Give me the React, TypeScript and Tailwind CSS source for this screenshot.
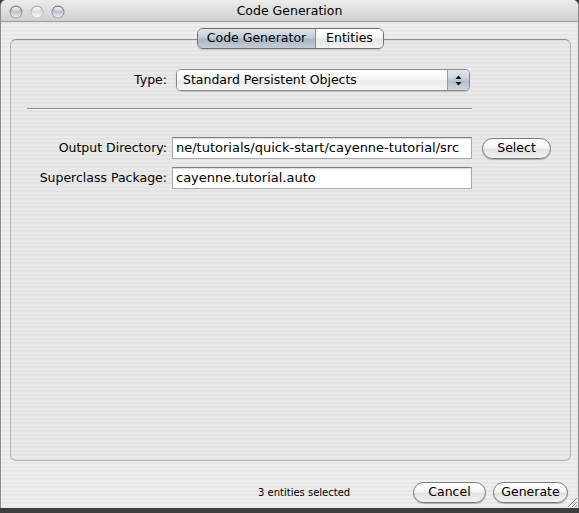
import React from "react";

const font = "font-['DejaVu_Sans',sans-serif]";

function Light({ faded }: { faded?: boolean }) {
  const id = faded ? "lf" : "ld";
  return (
    <svg width="14" height="14" viewBox="0 0 14 14">
      <defs>
        <linearGradient id={id + "b"} x1="0" y1="0" x2="0" y2="1">
          <stop offset="0" stopColor={faded ? "#9da2a8" : "#6f7680"} />
          <stop offset="1" stopColor={faded ? "#c4c8cc" : "#9aa1aa"} />
        </linearGradient>
        <linearGradient id={id + "f"} x1="0" y1="0" x2="0" y2="1">
          <stop offset="0" stopColor={faded ? "#c9ccd0" : "#a3a9b1"} />
          <stop offset="0.55" stopColor={faded ? "#dfe1e4" : "#c2c7ce"} />
          <stop offset="1" stopColor={faded ? "#f6f7f8" : "#eef0f2"} />
        </linearGradient>
        <linearGradient id={id + "h"} x1="0" y1="0" x2="0" y2="1">
          <stop offset="0" stopColor="#ffffff" stopOpacity="0.95" />
          <stop offset="1" stopColor="#ffffff" stopOpacity="0.15" />
        </linearGradient>
      </defs>
      <circle cx="7" cy="7" r="6.5" fill={`url(#${id}b)`} />
      <circle cx="7" cy="7" r="5.6" fill={`url(#${id}f)`} />
      <ellipse cx="7" cy="4.3" rx="3.8" ry="2.4" fill={`url(#${id}h)`} />
    </svg>
  );
}

function PillButton({ label, w }: { label: string; w: string }) {
  return (
    <div
      className={`${w} h-[21px] rounded-full border border-[#7a7a7a] bg-[linear-gradient(to_bottom,#ffffff_0%,#f4f4f4_45%,#e2e2e2_55%,#f2f2f2_100%)] shadow-[0_1px_1px_rgba(0,0,0,0.25)] flex items-center justify-center text-[12.5px] text-black leading-none`}
    >
      {label}
    </div>
  );
}

export default function App() {
  return (
    <div className={`w-[579px] h-[513px] bg-[#3e3e3e] overflow-hidden ${font}`}>
      <div className="w-[579px] h-[508px] rounded-t-[6px] overflow-hidden flex flex-col border-x border-[#8d8d8d] bg-[repeating-linear-gradient(to_bottom,#eeeeee_0px,#eeeeee_2px,#e7e7e7_2px,#e7e7e7_4px)]">
        {/* Title bar */}
        <div className="h-[22px] shrink-0 relative flex items-center justify-center border-b border-[#9a9a9a] bg-[linear-gradient(to_bottom,#ececec_0%,#dedede_50%,#cfcfcf_100%)]">
          <div className="absolute left-[8px] top-[5px] flex gap-[7px]">
            <Light />
            <Light faded />
            <Light />
          </div>
          <span className="text-[12.5px] text-black leading-none pt-[1px]">Code Generation</span>
        </div>

        {/* Body */}
        <div className="flex-1 flex flex-col pl-[9px] pr-[7px] pt-[6px]">
          {/* Segmented control */}
          <div className="relative z-10 flex justify-center -mb-[10px]">
            <div className="flex h-[21px] rounded-[6px] border border-[#6e6e6e] overflow-hidden shadow-[0_1px_1px_rgba(0,0,0,0.15)] text-[12.5px] leading-none">
              <div className="w-[118px] flex items-center justify-center text-black bg-[linear-gradient(to_bottom,#dfe4ea_0%,#c3ccd6_45%,#acb7c4_55%,#c4ccd6_100%)] border-r border-[#8a8a8a]">
                Code Generator
              </div>
              <div className="w-[67px] flex items-center justify-center text-black bg-[linear-gradient(to_bottom,#ffffff_0%,#f5f5f5_45%,#e6e6e6_55%,#f3f3f3_100%)]">
                Entities
              </div>
            </div>
          </div>

          {/* Tab box */}
          <div className="h-[422px] rounded-[6px] border border-[#b2b2b2] border-t-[#8f8f8f] bg-[repeating-linear-gradient(to_bottom,#e9e9e9_0px,#e9e9e9_2px,#e3e3e3_2px,#e3e3e3_4px)] flex flex-col pt-[29px] shadow-[inset_0_1px_1px_rgba(0,0,0,0.06)]">
            {/* Type row */}
            <div className="flex items-center h-[22px]">
              <div className="w-[156px] text-right text-[12.5px] text-black">Type:</div>
              <div className="ml-[9px] w-[294px] h-[22px] rounded-[5px] border border-[#8a8a8a] flex overflow-hidden shadow-[0_1px_1px_rgba(0,0,0,0.15)]">
                <div className="flex-1 flex items-center pl-[6px] text-[12.5px] text-black bg-[linear-gradient(to_bottom,#ffffff_0%,#f6f6f6_45%,#ebebeb_55%,#f7f7f7_100%)]">
                  Standard Persistent Objects
                </div>
                <div className="w-[22px] border-l border-[#9a9a9a] flex items-center justify-center bg-[linear-gradient(to_bottom,#e4e9ef_0%,#c7d0da_45%,#b3bfcc_55%,#cfd7df_100%)]">
                  <svg width="7" height="11" viewBox="0 0 7 11">
                    <path d="M3.5 0.5 L6.5 4 L0.5 4 Z" fill="#111" />
                    <path d="M3.5 10.5 L6.5 7 L0.5 7 Z" fill="#111" />
                  </svg>
                </div>
              </div>
            </div>

            {/* Separator */}
            <div className="ml-[16px] w-[445px] h-px bg-[#8c8c8c] mt-[17px] shadow-[0_1px_0_#fafafa]" />

            {/* Fields */}
            <div className="mt-[28px] flex flex-col gap-[8px]">
              <div className="flex items-center h-[22px]">
                <div className="w-[156px] text-right text-[12.5px] text-black whitespace-nowrap">Output Directory:</div>
                <div className="ml-[5px] w-[300px] h-[22px] bg-white border border-[#a8a8a8] border-t-[#7e7e7e] shadow-[inset_0_1px_1px_rgba(0,0,0,0.15)] flex items-center pl-[3px] overflow-hidden text-[13px] text-black whitespace-nowrap">
                  ne/tutorials/quick-start/cayenne-tutorial/src
                </div>
                <div className="ml-[10px]">
                  <PillButton label="Select" w="w-[69px]" />
                </div>
              </div>
              <div className="flex items-center h-[22px]">
                <div className="w-[156px] text-right text-[12.5px] text-black whitespace-nowrap">Superclass Package:</div>
                <div className="ml-[5px] w-[300px] h-[22px] bg-white border border-[#a8a8a8] border-t-[#7e7e7e] shadow-[inset_0_1px_1px_rgba(0,0,0,0.15)] flex items-center pl-[3px] overflow-hidden text-[13px] text-black whitespace-nowrap">
                  cayenne.tutorial.auto
                </div>
              </div>
            </div>
          </div>

          {/* Bottom row */}
          <div className="flex-1 relative flex items-start pt-[21px]">
            <div className="ml-[248px] text-[10px] text-black leading-none pt-[6px] whitespace-nowrap">
              3 entities selected
            </div>
            <div className="ml-auto flex gap-[7px] mr-[3px]">
              <PillButton label="Cancel" w="w-[73px]" />
              <PillButton label="Generate" w="w-[75px]" />
            </div>
            <svg className="absolute right-[-7px] bottom-0" width="13" height="13" viewBox="0 0 13 13">
              <path d="M12 3 L3 12 M12 7 L7 12 M12 10 L10 12" stroke="#8a8a8a" strokeWidth="1" />
              <path d="M12 4 L4 12 M12 8 L8 12" stroke="#ffffff" strokeWidth="1" />
            </svg>
          </div>
        </div>
      </div>
    </div>
  );
}
